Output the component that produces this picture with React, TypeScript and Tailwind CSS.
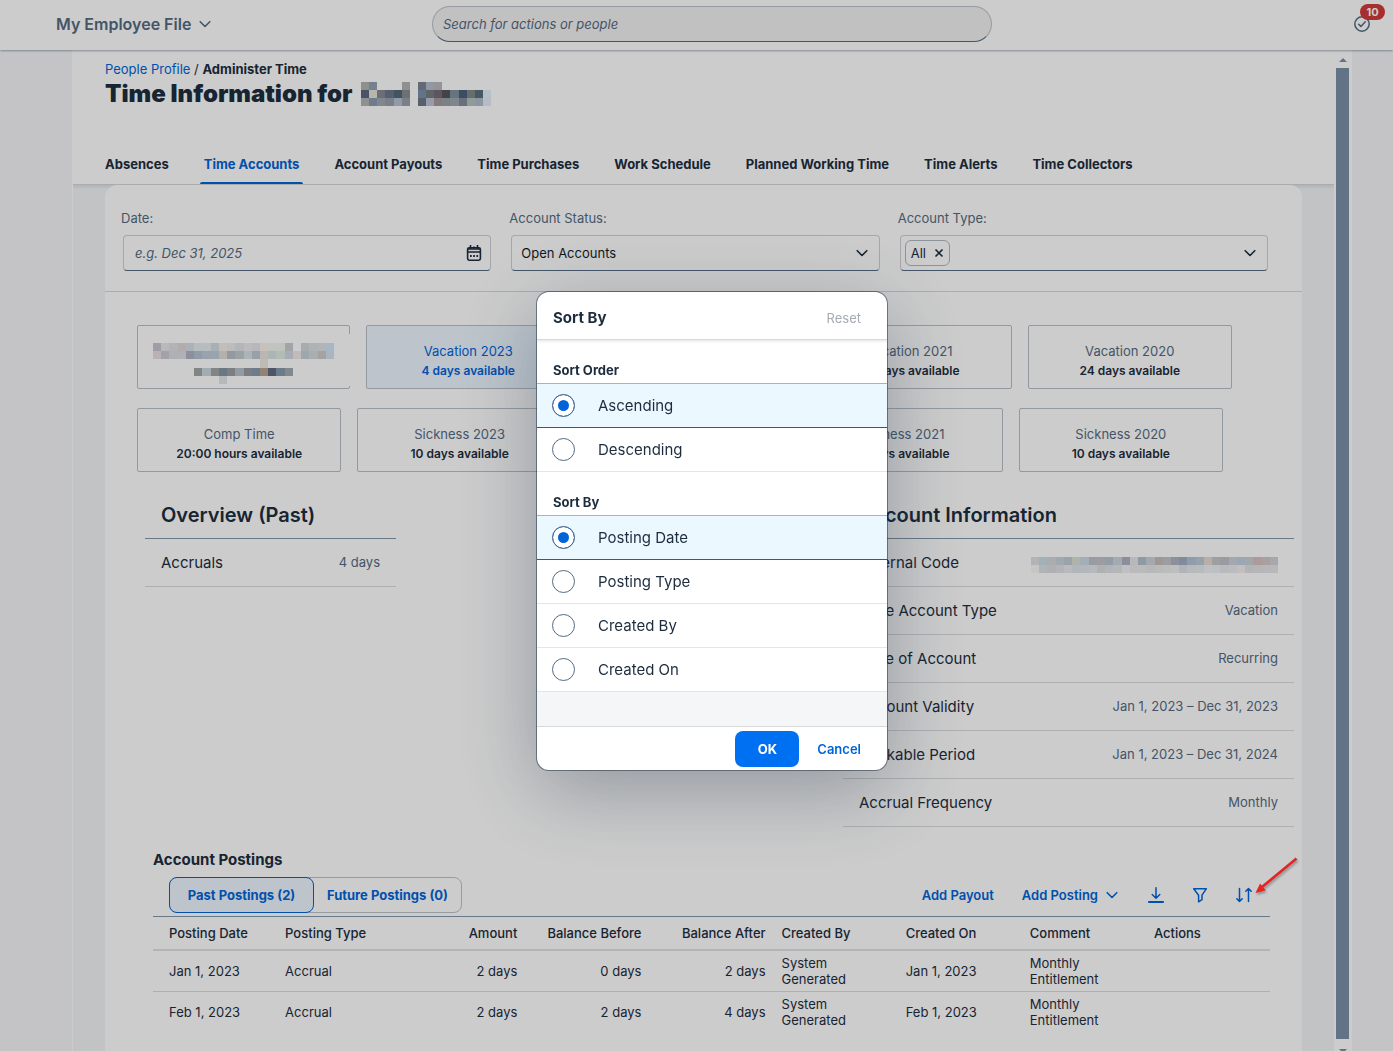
import { useState } from 'react';
import { clsx } from 'clsx';

interface IconProps {
  className?: string;
}

interface Tile {
  title: string;
  balance: string;
  active?: boolean;
}

interface Posting {
  date: string;
  type: string;
  amount: string;
  before: string;
  after: string;
  createdBy: string;
  createdOn: string;
  comment: string;
}

const tabs = [
  'Absences',
  'Time Accounts',
  'Account Payouts',
  'Time Purchases',
  'Work Schedule',
  'Planned Working Time',
  'Time Alerts',
  'Time Collectors',
];

const vacationTiles: Tile[] = [
  { title: 'Vacation 2023', balance: '4 days available', active: true },
  { title: 'Vacation 2022', balance: '24 days available' },
  { title: 'Vacation 2021', balance: '24 days available' },
  { title: 'Vacation 2020', balance: '24 days available' },
];

const otherTiles: Tile[] = [
  { title: 'Comp Time', balance: '20:00 hours available' },
  { title: 'Sickness 2023', balance: '10 days available' },
  { title: 'Sickness 2022', balance: '10 days available' },
  { title: 'Sickness 2021', balance: '10 days available' },
  { title: 'Sickness 2020', balance: '10 days available' },
];

const accountInfo = [
  { label: 'Time Account Type', value: 'Vacation' },
  { label: 'Type of Account', value: 'Recurring' },
  { label: 'Account Validity', value: 'Jan 1, 2023 – Dec 31, 2023' },
  { label: 'Bookable Period', value: 'Jan 1, 2023 – Dec 31, 2024' },
  { label: 'Accrual Frequency', value: 'Monthly' },
];

const columns = [
  { title: 'Posting Date' },
  { title: 'Posting Type' },
  { title: 'Amount', right: true },
  { title: 'Balance Before', right: true },
  { title: 'Balance After', right: true },
  { title: 'Created By' },
  { title: 'Created On' },
  { title: 'Comment' },
  { title: 'Actions' },
];

const postings: Posting[] = [
  {
    date: 'Jan 1, 2023',
    type: 'Accrual',
    amount: '2 days',
    before: '0 days',
    after: '2 days',
    createdBy: 'System Generated',
    createdOn: 'Jan 1, 2023',
    comment: 'Monthly Entitlement',
  },
  {
    date: 'Feb 1, 2023',
    type: 'Accrual',
    amount: '2 days',
    before: '2 days',
    after: '4 days',
    createdBy: 'System Generated',
    createdOn: 'Feb 1, 2023',
    comment: 'Monthly Entitlement',
  },
];

// Redacted values, one colour per block. "-" leaves the block empty.
const nameBlocks = [
  '8f908e 75828f - - - 8f908e - 626a75 8f98a5 939398',
  '465464 b8b5ae 6b6e74 55606f 455362 6e7174 - 63758a 5f6467 5e565e 454348 66757d 3c4d62 656f6d 4a5763 b4c0c9',
  '8f918f 6f7d8c 808790 7b7f88 8f9ca8 7d7f87 - 59606c 969daa 857a7d 7b8286 81868f 6a7177 8f9a9a 8b96a3 b6bdc6',
];

const tileBlocks = [
  'a29ca4 b9baba b2b3b7 b3adae acb2ba b6bcc0 b7bcbf a7b0b7 c3beb9 bdbcbd b4b6ba bcbdbe b6b9be c8c0ba bfc4c1 bfc5bf a3a3aa - a6acb0 aeb4b4 b3b5b8 a9b7c4',
  'b9b2b4 a3a2aa afb0b4 b0b1b6 8e8f9e 909ca8 99a3ad 9aa5ad b5b0ad 94989f 9ca2a5 acb4b7 99a1a8 bab6b3 acb5b5 b2bbb6 a8adb4 c0babb 9da8ad abaeb0 a3a3a4 acb5c0',
  '- - - - - - - - - - - - - c0bab6',
  '- - - - - 7f8684 a2adb2 7f8684 6a7985 7c7e7f 919ba4 7b7d82 6d7d8a 938375 4c5667 6c7b8a 83888d',
  '- - - - - - - - b7b8ba',
];

const codeBlocks = [
  'b2b3b7 a2b0b8 acadaf a0a8b1 98a3ad b0b3aa a2afb8 999ba0 9f9ba3 959ca8 a4abb0 8c8e9d b9b9b8 8d9ba5 a5a9af a09792 9d9da3 8b909d 808c9c 8f9dab 95a2ab b7afa9 9f9f9f 9b9aa0 a4a8ae 9aa8b5 a3a7ad aa9c9b aba19f a9a9ac',
  'c6c7c4 b1b3b7 b0b0b3 b4b5b9 b9babd b1b7bb b3b6ba b7babd b0b1b3 b2b4b9 b5b6b9 bec0c5 bababb babbbb b9b9ba b9babb bcbcbd bcbec0 b0b3ba b6babf b8bbbd bec0c3 bdbfc3 b9bbbe bbbbc0 c3bfc1 b4b5b7 b6b6b9 b7b7ba b7b8ba',
];

function Blocks({ rows, className }: { rows: string[]; className?: string }) {
  const count = Math.max(...rows.map(row => row.split(' ').length));
  return (
    <svg
      className={clsx('shrink-0 brightness-125', className)}
      viewBox={`0 0 ${count} ${rows.length}`}
      preserveAspectRatio="none"
      shapeRendering="crispEdges"
      aria-hidden="true"
    >
      {rows.map((row, y) =>
        row
          .split(' ')
          .map((color, x) =>
            color === '-' ? null : (
              <rect key={`${x}-${y}`} x={x} y={y} width="1" height="1" fill={`#${color}`} />
            )
          )
      )}
    </svg>
  );
}

function ChevronIcon({ className }: IconProps) {
  return (
    <svg className={className} viewBox="0 0 12 12" fill="none" stroke="currentColor" aria-hidden="true">
      <path d="M1.200 3.700 6 8.500l4.800-4.800" strokeWidth="1.600" strokeLinecap="round" strokeLinejoin="round" />
    </svg>
  );
}

function CalendarIcon({ className }: IconProps) {
  return (
    <svg className={className} viewBox="0 0 16 16" fill="none" stroke="currentColor" aria-hidden="true">
      <rect x="1.600" y="2.800" width="12.800" height="12.400" rx="1.600" strokeWidth="1.600" />
      <path d="M1.600 7h12.800M1.600 4h12.800" strokeWidth="1.600" />
      <path d="M4.500 0v4M11.500 0v4M8 1.500v2" strokeWidth="1.600" />
      <path d="M4 11h1.700M7.200 11h1.700M10.400 11h1.700" strokeWidth="1.800" />
    </svg>
  );
}

function TaskIcon({ className }: IconProps) {
  return (
    <svg className={className} viewBox="0 0 16 16" fill="none" stroke="currentColor" aria-hidden="true">
      <circle cx="8" cy="8" r="7.200" strokeWidth="1.500" />
      <path d="m4.700 8.200 2.200 2.200 4.400-4.600" strokeWidth="1.500" strokeLinecap="round" strokeLinejoin="round" />
    </svg>
  );
}

function DownloadIcon({ className }: IconProps) {
  return (
    <svg className={className} viewBox="0 0 16 16" fill="none" stroke="currentColor" aria-hidden="true">
      <path d="M8 .8v10M4.200 7.500 8 11.200l3.800-3.700" strokeWidth="1.500" strokeLinecap="round" strokeLinejoin="round" />
      <path d="M.8 15h14.400" strokeWidth="1.800" strokeLinecap="round" />
    </svg>
  );
}

function FilterIcon({ className }: IconProps) {
  return (
    <svg className={className} viewBox="0 0 16 16" fill="none" stroke="currentColor" aria-hidden="true">
      <path
        d="M1.700 1.800h12.600L10 8.200v4.400l-3.400 2.200V8.200z"
        strokeWidth="1.500"
        strokeLinecap="round"
        strokeLinejoin="round"
      />
    </svg>
  );
}

function SortIcon({ className }: IconProps) {
  return (
    <svg className={className} viewBox="0 0 16 16" fill="none" stroke="currentColor" aria-hidden="true">
      <path
        d="M3.500 1.500v13M.8 11.800l2.700 2.700 2.700-2.700M12.500 14.500v-13M9.800 4.200l2.700-2.700 2.700 2.700"
        strokeWidth="1.500"
        strokeLinecap="round"
        strokeLinejoin="round"
      />
    </svg>
  );
}

function ShellBar() {
  return (
    <header className="relative z-10 grid h-[50px] shrink-0 grid-cols-[1fr_minmax(0,560px)_1fr] items-center bg-white pt-1 pr-[25px] pb-1.5 pl-14 shadow-[0_1px_2px_rgba(34,53,72,0.4)]">
      <button className="flex items-center gap-2 justify-self-start text-base font-semibold text-[#556b82]">
        My Employee File
        <ChevronIcon className="size-3" />
      </button>
      <input
        type="search"
        aria-label="Search"
        placeholder="Search for actions or people"
        className="h-9 w-full rounded-full border border-[#bcc3ca] border-b-[#556b82] bg-[#f2f2f2] px-2.5 text-[13px] placeholder:text-[#556b82] placeholder:italic"
      />
      <button aria-label="Notifications" className="relative -mr-0.5 justify-self-end text-[#556b82]">
        <TaskIcon className="size-4" />
        <span className="absolute -top-3 left-1.5 h-4 w-[25px] rounded-full bg-[#d03a3a] text-center text-[11px] leading-4 font-bold text-white">
          10
        </span>
      </button>
    </header>
  );
}

function PageHeader() {
  return (
    <div className="relative border-b border-[#d5d7da] bg-white px-8 pt-[11px] shadow-[0_2px_3px_rgba(34,53,72,0.1)]">
      <nav aria-label="Breadcrumb" className="text-[13px] leading-4">
        <a href="#profile" className="text-[#0064d9]">
          People Profile
        </a>{' '}
        / <span className="font-bold">Administer Time</span>
      </nav>
      <div className="mt-[3px] flex items-center gap-2">
        <h1 className="text-2xl leading-7 font-black">Time Information for</h1>
        <Blocks rows={nameBlocks} className="h-6 w-[130px]" />
      </div>
      <nav className="mt-9 flex h-10 gap-[35px] text-[13px] font-bold whitespace-nowrap">
        {tabs.map(tab => (
          <a
            key={tab}
            href="#tab"
            className={clsx(
              'relative flex items-center pt-0.5',
              tab === 'Time Accounts' &&
                'text-[#0064d9] after:absolute after:-inset-x-1 after:bottom-0 after:h-0.5 after:rounded-t-sm after:bg-[#0064d9]'
            )}
          >
            {tab}
          </a>
        ))}
      </nav>
    </div>
  );
}

function Filters() {
  const fieldClass =
    'ml-0.5 flex h-9 items-center rounded border border-[#cdd2d8] border-b-[#556b82] bg-white text-[13px]';
  const labelClass = 'mb-[9px] block text-[13px] leading-4 text-[#556b82]';

  return (
    <div className="grid grid-cols-3 gap-[18px] border-b border-[#d5d7da] pt-[25px] pr-[34px] pb-5 pl-4">
      <div>
        <label htmlFor="date" className={labelClass}>
          Date:
        </label>
        <div className={fieldClass}>
          <input
            id="date"
            placeholder="e.g. Dec 31, 2025"
            className="h-full min-w-0 flex-1 pl-[11px] placeholder:text-[#556b82] placeholder:italic"
          />
          <button aria-label="Open calendar" className="px-2">
            <CalendarIcon className="size-4" />
          </button>
        </div>
      </div>
      <div>
        <label htmlFor="status" className={labelClass}>
          Account Status:
        </label>
        <div className={clsx(fieldClass, 'relative')}>
          <select id="status" className="h-full w-full appearance-none pt-0.5 pl-[9px] text-[#131e29]">
            <option>Open Accounts</option>
            <option>Closed Accounts</option>
          </select>
          <ChevronIcon className="pointer-events-none absolute right-[11px] size-3" />
        </div>
      </div>
      <div>
        <label htmlFor="type" className={labelClass}>
          Account Type:
        </label>
        <div className={clsx(fieldClass, 'pr-[11px] pl-1')}>
          <button className="flex h-[26px] items-center gap-2 rounded-md border border-[#b0b8c1] px-[5px]">
            <span className="pt-0.5">All</span>
            <svg className="size-2.5" viewBox="0 0 10 10" stroke="currentColor" strokeWidth="1.600" aria-hidden="true">
              <path d="m1.500 1.500 7 7m0-7-7 7" />
            </svg>
          </button>
          <input id="type" className="h-full min-w-0 flex-1" />
          <ChevronIcon className="size-3" />
        </div>
      </div>
    </div>
  );
}

function AccountTile({ tile }: { tile: Tile }) {
  return (
    <button
      className={clsx(
        'h-16 min-w-0 flex-1 rounded-xs border border-[#b8c0c8] pt-2',
        tile.active ? 'bg-[#edf6ff] text-[#0064d9]' : 'bg-white'
      )}
    >
      <span className={clsx('block text-[13px] leading-5', !tile.active && 'text-[#556b82]')}>{tile.title}</span>
      <span className="block text-xs leading-5 font-semibold">{tile.balance}</span>
    </button>
  );
}

function Tiles() {
  return (
    <div className="flex flex-col gap-[19px] px-8 pt-[33px]">
      <div className="flex gap-4 pr-[38px]">
        <button aria-label="Hidden account" className="relative h-16 w-[213px] shrink-0 rounded-xs border border-[#b8c0c8]">
          <Blocks rows={tileBlocks} className="mx-auto mt-3 h-[41px] w-[181px]" />
          <span className="absolute top-2 -right-px bottom-0.5 w-px bg-white" />
        </button>
        {vacationTiles.map(tile => (
          <AccountTile key={tile.title} tile={tile} />
        ))}
      </div>
      <div className="flex gap-4 pr-[47px]">
        {otherTiles.map(tile => (
          <AccountTile key={tile.title} tile={tile} />
        ))}
      </div>
    </div>
  );
}

function Details() {
  const rowClass = 'flex h-12 items-center justify-between border-b border-[#d9dbde] px-4';
  const headingClass = 'flex h-12 items-center border-b border-[#8396a8] px-4 text-xl font-semibold';
  const nameClass = 'pt-0.5 text-[15px]';

  return (
    <div className="mt-[19px] flex items-start justify-between pr-2 pl-10">
      <section className="w-[251px]">
        <h2 className={headingClass}>Overview (Past)</h2>
        <div className={rowClass}>
          <span className={nameClass}>Accruals</span>
          <span className="text-[13px] text-[#556b82]">4 days</span>
        </div>
      </section>
      <section className="w-[451px]">
        <h2 className={headingClass}>Account Information</h2>
        <div className={rowClass}>
          <span className={nameClass}>External Code</span>
          <Blocks rows={codeBlocks} className="mt-1 h-4 w-[247px]" />
        </div>
        {accountInfo.map(item => (
          <div key={item.label} className={rowClass}>
            <span className={nameClass}>{item.label}</span>
            <span className="text-[13px] text-[#556b82]">{item.value}</span>
          </div>
        ))}
      </section>
    </div>
  );
}

function Postings() {
  const iconButton = 'relative flex size-9 items-center justify-center';
  const cell = 'border-b border-[#d9dbde] px-2 py-1 first:pl-4';

  return (
    <section className="mt-[21px] mr-8 ml-12 pb-8">
      <h2 className="text-[15px] leading-6 font-bold">Account Postings</h2>
      <div className="mt-[5px] mb-[3px] flex justify-between pr-2 pl-4 text-[13px] text-[#0064d9]">
        <div className="flex h-9 rounded-lg border border-[#bcc3ca] font-bold">
          <button className="-my-px -ml-px h-9 w-[145px] rounded-lg border border-[#0064d9] bg-[#edf6ff] pt-0.5">
            Past Postings (2)
          </button>
          <button className="w-[147px] pt-0.5">Future Postings (0)</button>
        </div>
        <div className="flex gap-2 font-semibold">
          <button className="px-2.5 pt-0.5">Add Payout</button>
          <button className="flex items-center gap-2 pr-3 pl-2.5">
            <span className="pt-0.5">Add Posting</span>
            <ChevronIcon className="size-3" />
          </button>
          <button aria-label="Export" className={iconButton}>
            <DownloadIcon className="size-4" />
          </button>
          <button aria-label="Filter" className={iconButton}>
            <FilterIcon className="size-4" />
          </button>
          <button aria-label="Sort" className={iconButton}>
            <SortIcon className="size-4" />
            {/* callout arrow, stays above the dimmed page */}
            <svg
              className="absolute -top-5 left-7 z-50 h-10 w-12 drop-shadow-[1px_2px_1px_rgba(0,0,0,0.3)]"
              viewBox="0 0 48 40"
              aria-hidden="true"
            >
              <path d="M42.500 1.500 8 30" stroke="#e62222" strokeWidth="2.600" />
              <path d="m1.500 36 4.600-9.400 5.600 6.600z" fill="#e62222" />
            </svg>
          </button>
        </div>
      </div>
      <table className="w-full table-fixed border-separate border-spacing-0 border-t border-[#8396a8] text-[13px] leading-4">
        <thead>
          <tr className="h-[34px]">
            {columns.map(column => (
              <th
                key={column.title}
                className={clsx(
                  'border-b-2 border-[#dfe1e3] px-2 font-medium whitespace-nowrap first:pl-4',
                  column.right ? 'text-right' : 'text-left'
                )}
              >
                {column.title}
              </th>
            ))}
          </tr>
        </thead>
        <tbody className="[&>tr:last-child>td]:border-transparent">
          {postings.map(posting => (
            <tr key={posting.date}>
              <td className={cell}>{posting.date}</td>
              <td className={cell}>{posting.type}</td>
              <td className={clsx(cell, 'text-right')}>{posting.amount}</td>
              <td className={clsx(cell, 'text-right')}>{posting.before}</td>
              <td className={clsx(cell, 'text-right')}>{posting.after}</td>
              <td className={cell}>{posting.createdBy}</td>
              <td className={cell}>{posting.createdOn}</td>
              <td className={cell}>{posting.comment}</td>
              <td className={cell} />
            </tr>
          ))}
        </tbody>
      </table>
    </section>
  );
}

function ScrollTrack() {
  return (
    <div className="flex w-[18px] shrink-0 flex-col items-center bg-white pr-[3px] pl-0.5 text-[#7c90a8]">
      <svg className="h-[18px] w-2 shrink-0" viewBox="0 0 8 18" fill="currentColor" aria-hidden="true">
        <path d="M0 12h8L4 8z" />
      </svg>
      <div className="w-full flex-1 bg-[#7c90a8]" />
      <svg className="h-3 w-2 shrink-0" viewBox="0 0 8 12" fill="currentColor" aria-hidden="true">
        <path d="M0 10h8l-4 4z" />
      </svg>
    </div>
  );
}

interface RadioGroupProps {
  title: string;
  name: string;
  options: string[];
}

function RadioGroup({ title, name, options }: RadioGroupProps) {
  const [selected, setSelected] = useState(options[0]);

  return (
    <div role="radiogroup" aria-label={title}>
      <h3 className="flex h-11 items-end border-b border-[#a8b3bd] px-4 pb-[5px] text-[13px] leading-4 font-bold">
        {title}
      </h3>
      {options.map(option => (
        <label
          key={option}
          className={clsx(
            'flex h-11 items-center gap-[23px] border-b pl-[15px] text-[15px]',
            selected === option ? 'border-[#0064d9] bg-[#ebf8ff]' : 'border-[#e5e5e5]'
          )}
        >
          <input
            type="radio"
            name={name}
            checked={selected === option}
            onChange={() => setSelected(option)}
            className="size-[23px] appearance-none rounded-full border border-[#556b82] bg-white checked:bg-[#0064d9] checked:shadow-[inset_0_0_0_5px_white]"
          />
          <span className="pt-0.5">{option}</span>
        </label>
      ))}
    </div>
  );
}

function SortDialog() {
  return (
    <div className="fixed inset-0 z-40 flex items-center justify-center bg-black/20 pt-[11px] pl-[31px]">
      <div
        role="dialog"
        aria-label="Sort By"
        className="w-[350px] overflow-hidden rounded-xl bg-white shadow-[0_0_0_1px_rgba(34,53,72,0.55),0_20px_80px_rgba(34,53,72,0.35)]"
      >
        <div className="relative flex h-12 items-center justify-between border-b border-[#d9d9d9] px-4 pt-1.5 shadow-[0_1px_3px_rgba(34,53,72,0.15)]">
          <h2 className="text-[15px] font-bold">Sort By</h2>
          <button disabled className="px-2.5 text-[13px] text-[#a5abb2]">
            Reset
          </button>
        </div>
        <RadioGroup title="Sort Order" name="order" options={['Ascending', 'Descending']} />
        <RadioGroup
          title="Sort By"
          name="field"
          options={['Posting Date', 'Posting Type', 'Created By', 'Created On']}
        />
        <div className="h-[34px] bg-[#f5f6f7]" />
        <div className="flex h-11 items-center justify-end gap-2 border-t border-[#d9d9d9] pr-4 text-[13px] font-semibold">
          <button className="h-9 w-16 rounded-lg bg-[#0070f2] pt-0.5 font-bold text-white">OK</button>
          <button className="h-9 px-2.5 pt-0.5 text-[#0064d9]">Cancel</button>
        </div>
      </div>
    </div>
  );
}

export default function App() {
  return (
    <div className="flex h-screen flex-col overflow-hidden bg-[#f5f6f8] font-[Inter,sans-serif] text-[#1d2d3e]">
      <ShellBar />
      <div className="mr-[41px] ml-[72px] flex min-h-0 flex-1 border-l border-white">
        <main className="min-w-0 flex-1 overflow-hidden bg-[#f2f4f7]">
          <PageHeader />
          <div className="relative mx-8 min-h-full rounded-t-xl bg-white">
            <Filters />
            <Tiles />
            <Details />
            <Postings />
          </div>
        </main>
        <ScrollTrack />
      </div>
      <SortDialog />
    </div>
  );
}
